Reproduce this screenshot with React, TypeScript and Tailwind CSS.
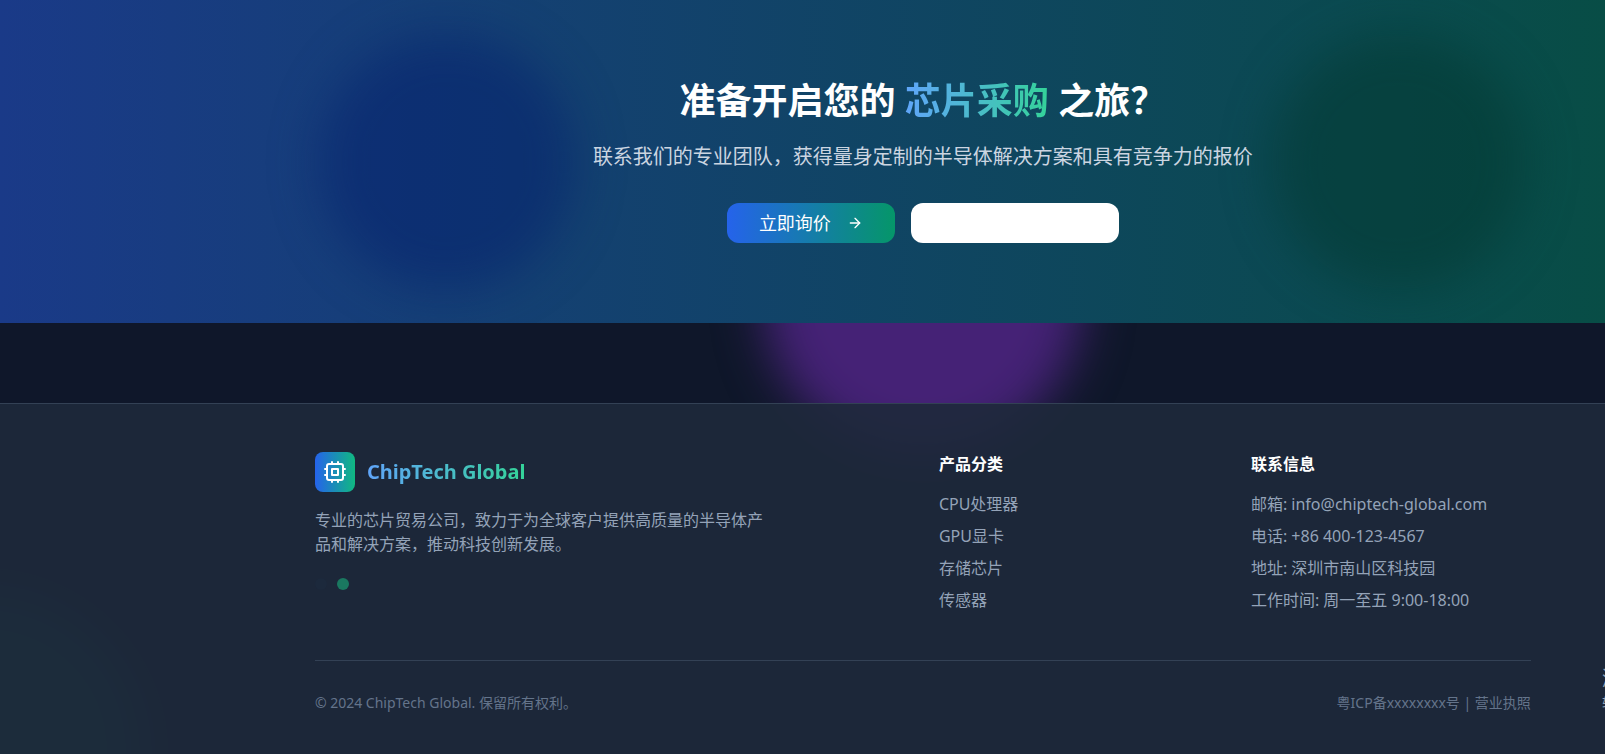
import React from 'react';
import { ArrowRight } from 'lucide-react';

const products = ['CPU处理器', 'GPU显卡', '存储芯片', '传感器'];

const contacts = [
  '邮箱: info@chiptech-global.com',
  '电话: +86 400-123-4567',
  '地址: 深圳市南山区科技园',
  '工作时间: 周一至五 9:00-18:00',
];

const ChipIcon: React.FC = () => (
  <svg
    width="24"
    height="24"
    viewBox="0 0 24 24"
    fill="none"
    stroke="currentColor"
    strokeWidth="2"
    strokeLinecap="round"
    strokeLinejoin="round"
    aria-hidden="true"
  >
    <rect x="4" y="4" width="16" height="16" rx="2" />
    <rect x="9" y="9" width="6" height="6" />
    <path d="M15 2v2M15 20v2M2 15h2M2 9h2M20 15h2M20 9h2M9 2v2M9 20v2" />
  </svg>
);

const CallToAction: React.FC = () => (
  <section className="relative overflow-hidden bg-linear-to-r/srgb from-[#1a3a88] to-[#05503c] pt-[79px] pb-20">
    {/* Background glow */}
    <div className="absolute inset-0">
      <div className="relative mx-auto h-full max-w-[1208px]">
        <div className="absolute top-1/2 left-0 size-64 -translate-y-1/2 rounded-full bg-[#04206e]/50 blur-xl" />
        <div className="absolute top-1/2 right-0 size-64 -translate-y-1/2 rounded-full bg-[#023830]/50 blur-xl" />
      </div>
    </div>

    <div className="relative mx-auto max-w-7xl px-8 text-center">
      <h2 className="mb-5 text-4xl/11 font-bold text-white">
        准备开启您的{' '}
        <span className="bg-linear-to-r/srgb from-[#60a5fa] to-[#34d399] bg-clip-text text-transparent">芯片采购</span>{' '}
        之旅？
      </h2>
      <p className="mb-8 text-xl text-[#cbd5e1]">
        联系我们的专业团队，获得量身定制的半导体解决方案和具有竞争力的报价
      </p>
      <div className="flex justify-center gap-4">
        <button className="flex h-10 items-center gap-4 rounded-xl bg-linear-to-r/srgb from-[#2563eb] to-[#059669] px-8 text-lg text-white">
          立即询价
          <ArrowRight size={16} />
        </button>
        <button aria-label="联系我们" className="h-10 w-52 rounded-xl bg-white" />
      </div>
    </div>
  </section>
);

const Footer: React.FC = () => (
  <footer className="relative border-t border-[#334155] bg-[#1e293b]/90">
    <div className="mx-auto max-w-7xl px-8 py-12">
      <div className="grid grid-cols-4 gap-8">
        {/* Company */}
        <div className="col-span-2">
          <div className="mb-4 flex items-center gap-3">
            <div className="flex size-10 items-center justify-center rounded-lg bg-linear-to-r/srgb from-[#2563eb] to-[#10b981] text-white">
              <ChipIcon />
            </div>
            <span className="bg-linear-to-r/srgb from-[#60a5fa] to-[#34d399] bg-clip-text text-xl font-bold text-transparent">
              ChipTech Global
            </span>
          </div>
          <p className="max-w-md text-[#94a3b8]">
            专业的芯片贸易公司，致力于为全球客户提供高质量的半导体产品和解决方案，推动科技创新发展。
          </p>
          <div className="mt-[22px] flex gap-[10px]">
            <div className="size-3 rounded-full bg-[#1c293c]" />
            <div className="size-3 rounded-full bg-[#1a7860]" />
          </div>
        </div>

        {/* Products */}
        <div>
          <h3 className="mb-4 font-bold text-white">产品分类</h3>
          <ul className="space-y-2 text-[#94a3b8]">
            {products.map((item) => (
              <li key={item}>{item}</li>
            ))}
          </ul>
        </div>

        {/* Contact */}
        <div>
          <h3 className="mb-4 font-bold text-white">联系信息</h3>
          <ul className="space-y-2 text-[#94a3b8]">
            {contacts.map((item) => (
              <li key={item}>{item}</li>
            ))}
          </ul>
        </div>
      </div>

      <div className="mt-12 flex items-center justify-between border-t border-[#334155] pt-8 text-sm text-[#64748b]">
        <p>© 2024 ChipTech Global. 保留所有权利。</p>
        <p>粤ICP备xxxxxxxx号 | 营业执照</p>
      </div>
    </div>
  </footer>
);

const App: React.FC = () => {
  return (
    <div
      lang="zh-CN"
      className="relative h-screen overflow-hidden bg-[#0f172a] font-['Noto_Sans','Noto_Sans_CJK_SC',sans-serif]"
    >
      {/* The page is wider than the window and runs off its right edge */}
      <div className="relative w-[115%]">
        <div className="absolute top-[134px] left-1/2 size-80 -translate-x-1/2 rounded-full bg-[#452276] blur-xl" />
        <div className="absolute top-[592px] -left-44 size-80 rounded-full bg-[#10b981]/30 blur-xl" />
        <CallToAction />
        <div className="h-20" />
        <Footer />
      </div>

      {/* System watermark */}
      <div className="absolute top-[665px] left-full -ml-[3px] whitespace-nowrap text-[#94a3b8]">
        <p className="text-xl">激活 Windows</p>
        <p className="text-sm">转到“设置”以激活 Windows。</p>
      </div>
    </div>
  );
};

export default App;
